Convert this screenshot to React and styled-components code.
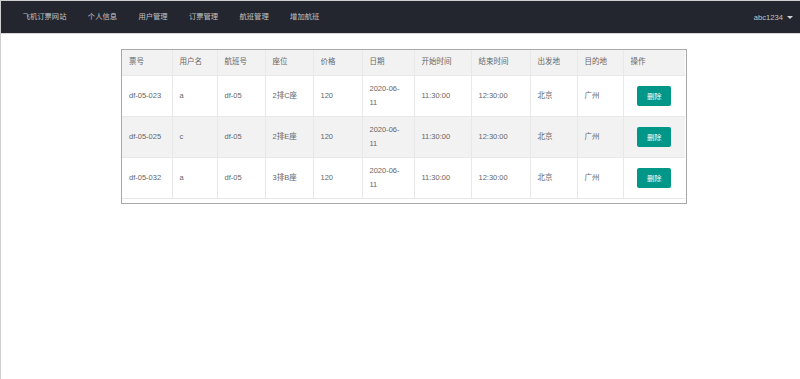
import React from "react";
import styled, { createGlobalStyle } from "styled-components";

const GlobalStyle = createGlobalStyle`
  html, body {
    margin: 0;
    padding: 0;
    background: #fff;
    font-family: "Liberation Sans", "Noto Sans CJK SC", sans-serif;
  }
  #root {
    min-height: 379px;
    box-sizing: border-box;
    border-left: 1px solid #cfcfcf;
    border-top: 1px solid #cfcfcf;
  }
`;

const columns = [
  { title: "票号", width: 50 },
  { title: "用户名", width: 45 },
  { title: "航班号", width: 48 },
  { title: "座位", width: 48 },
  { title: "价格", width: 49 },
  { title: "日期", width: 52 },
  { title: "开始时间", width: 57 },
  { title: "结束时间", width: 59 },
  { title: "出发地", width: 47 },
  { title: "目的地", width: 46 },
  { title: "操作", width: 62 },
];

const tickets = [
  ["df-05-023", "a", "df-05", "2排C座", "120", "2020-06-11", "11:30:00", "12:30:00", "北京", "广州"],
  ["df-05-025", "c", "df-05", "2排E座", "120", "2020-06-11", "11:30:00", "12:30:00", "北京", "广州"],
  ["df-05-032", "a", "df-05", "3排B座", "120", "2020-06-11", "11:30:00", "12:30:00", "北京", "广州"],
];

const navItems = ["飞机订票网站", "个人信息", "用户管理", "订票管理", "航班管理", "增加航班"];

function App() {
  return (
    <>
      <GlobalStyle />
      <Header>
        <Nav>
          {navItems.map((item) => (
            <NavItem key={item}>{item}</NavItem>
          ))}
        </Nav>
        <User>
          abc1234
          <Caret />
        </User>
      </Header>
      <Panel>
        <Table>
          <colgroup>
            {columns.map((c) => (
              <col key={c.title} style={{ width: c.width }} />
            ))}
          </colgroup>
          <thead>
            <Row head>
              {columns.map((c) => (
                <Cell as="th" key={c.title}>
                  {c.title}
                </Cell>
              ))}
            </Row>
          </thead>
          <tbody>
            {tickets.map((t, i) => (
              <Row key={t[0]} striped={i % 2 === 1}>
                {t.map((v, j) => (
                  <Cell key={j}>{v}</Cell>
                ))}
                <Cell center>
                  <DeleteButton>删除</DeleteButton>
                </Cell>
              </Row>
            ))}
          </tbody>
        </Table>
      </Panel>
    </>
  );
}

export default App;

const Header = styled.header`
  height: 32px;
  background-color: #23262e;
  display: flex;
  align-items: center;
  justify-content: space-between;
  padding: 0 7px 0 11px;
  border-bottom: 1px solid #d6d6d6;
`;

const Nav = styled.nav`
  display: flex;
  align-items: center;
`;

const NavItem = styled.a`
  color: rgba(255, 255, 255, 0.72);
  font-size: 7.3px;
  padding: 0 10.7px;
  line-height: 32px;
  cursor: pointer;
`;

const User = styled.div`
  color: rgba(255, 255, 255, 0.72);
  font-size: 7.6px;
  display: flex;
  align-items: center;
  gap: 4px;
`;

const Caret = styled.span`
  width: 0;
  height: 0;
  border-left: 3px solid transparent;
  border-right: 3px solid transparent;
  border-top: 3.5px solid rgba(255, 255, 255, 0.8);
`;

const Panel = styled.div`
  width: 564px;
  margin: 15px 0 0 120px;
  border: 1px solid #a8a8a8;
  padding-bottom: 4px;
  background: #fff;
`;

const Table = styled.table`
  width: 563px;
  table-layout: fixed;
  border-collapse: collapse;
  color: #666;
  font-size: 7.5px;
`;

const Row = styled.tr`
  background-color: ${(p) => (p.head || p.striped ? "#f2f2f2" : "#fff")};
  height: ${(p) => (p.head ? "25px" : "41px")};
`;

const Cell = styled.td`
  border-right: 1px solid #e8e8e8;
  border-bottom: 1px solid #e8e8e8;
  padding: 0 7px;
  text-align: ${(p) => (p.center ? "center" : "left")};
  font-weight: normal;
  line-height: 14px;
  vertical-align: middle;
  &:last-child {
    border-right: none;
  }
`;

const DeleteButton = styled.button`
  width: 34px;
  height: 20px;
  background-color: #009688;
  color: #fff;
  border: none;
  border-radius: 2px;
  font-family: inherit;
  font-size: 7.3px;
  padding: 0;
  cursor: pointer;
`;
